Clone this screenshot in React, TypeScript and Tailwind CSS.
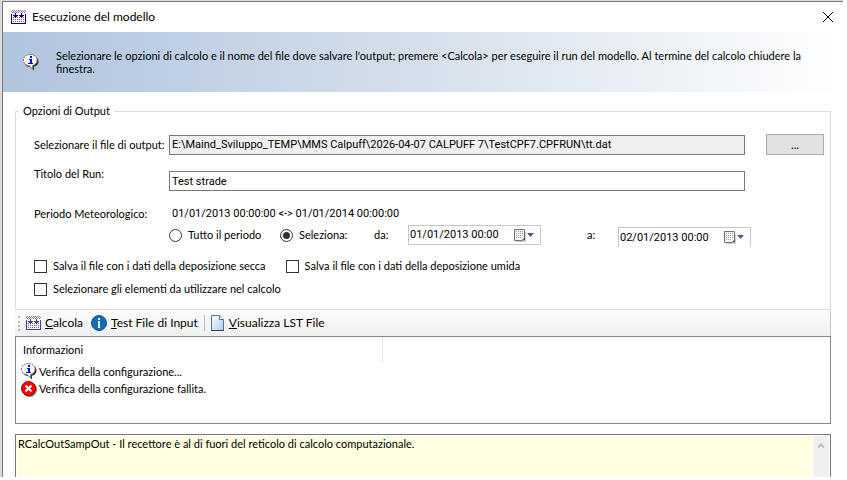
import React, { useState } from "react";

function BuildIcon({ dot, line }: { dot: string; line: string }) {
  const dots: [number, number][] = [];
  for (const y of [0, 2]) for (let x = 0; x < 7; x++) dots.push([1 + x * 2, y]);
  for (const x of [0, 2, 4, 6, 8, 10, 12, 14]) dots.push([x, 1]);
  const low: [number, number][] = [];
  for (const y of [7, 9, 11]) for (let x = 0; x < 6; x++) low.push([2 + x * 2, y]);
  return (
    <svg width="15" height="15" viewBox="0 0 15 15" shapeRendering="crispEdges" aria-hidden="true">
      {dots.map(([x, y]) => (
        <rect key={`t${x}-${y}`} x={x} y={y} width="1" height="1" fill={dot} opacity="0.7" />
      ))}
      {low.map(([x, y]) => (
        <rect key={`b${x}-${y}`} x={x} y={y} width="1" height="1" fill={dot} opacity="0.8" />
      ))}
      <path
        fill={line}
        d="M0 4h1v10H0zM14 4h1v10h-1zM0 13h15v1H0zM4 3h1v5H4zM2 5h5v1H2zM3 6h3v1H3zM10 3h1v5h-1zM8 5h5v1H8zM9 6h3v1H9z"
      />
    </svg>
  );
}

function BalloonIcon() {
  return (
    <svg width="16" height="17" viewBox="0 0 16 17" aria-hidden="true">
      <path d="M8 2c4.500 0 7.500 2 7.500 5.500S13 12.500 11 12.500L11 16.500 7 13C4 13 2 11 1.500 9z" fill="#333" />
      <path
        d="M7.500.5c4 0 6.500 2.500 6.500 5.500s-2 5-4.500 5.500V15L6 11.500C3 11.500.5 9.500.5 6S3.500.5 7.500.5z"
        fill="#fff"
        stroke="#777"
        strokeDasharray="2 1"
      />
      <path d="M7 2h2v2H7zM6 5h3v4h1v1H5V9h2V6H6z" fill="#00f" shapeRendering="crispEdges" />
    </svg>
  );
}

function ErrorIcon() {
  return (
    <svg width="16" height="16" viewBox="0 0 16 16" aria-hidden="true">
      <circle cx="8.500" cy="8.500" r="7.500" fill="#777" />
      <circle cx="7.500" cy="7.500" r="7" fill="#f00" stroke="#a00000" />
      <path d="M4.500 4.500l6 6M10.500 4.500l-6 6" stroke="#fff" strokeWidth="2" />
    </svg>
  );
}

function InfoIcon() {
  return (
    <svg width="16" height="16" viewBox="0 0 16 16" aria-hidden="true">
      <circle cx="8" cy="8" r="7.500" fill="#0f6cbd" stroke="#0b559a" />
      <path d="M7 3h2v2H7zM7 6h2v7H7z" fill="#fff" />
    </svg>
  );
}

function PageIcon() {
  return (
    <svg width="14" height="16" viewBox="0 0 14 16" aria-hidden="true">
      <defs>
        <linearGradient id="sheet" x1="0" y1="0" x2="1" y2="1">
          <stop offset="0" stopColor="#fff" />
          <stop offset="1" stopColor="#a9cdf5" />
        </linearGradient>
      </defs>
      <path d="M.5.5h8l4 4v11H.5z" fill="url(#sheet)" stroke="#5c6f8c" />
      <path d="M8.500.5v4h4" fill="#fff" stroke="#5c6f8c" />
      <path d="M0 15.500h13" stroke="#444" />
    </svg>
  );
}

function CalendarIcon() {
  return (
    <svg width="21" height="13" viewBox="0 0 21 13" aria-hidden="true">
      <path d="M2 12.500h9.500V3" fill="none" stroke="#ccc" />
      <path d="M.5.5h10v8.500l-2.500 2.500H.5z" fill="#f4f4f6" stroke="#7a6d6d" />
      <path d="M2 2.500h7M2 4.500h7M2 6.500h7M2 8.500h5" stroke="#93a0b8" strokeDasharray="1 1" />
      <path d="M11 8.500v3H8z" fill="#555" />
      <path d="M13 4h7l-3.500 4z" fill="#44598a" />
    </svg>
  );
}

function DatePicker({ id, value, clipped }: { id: string; value: string; clipped?: boolean }) {
  return (
    <div
      className={`flex h-5 w-[133px] items-center border border-[#c8c8c8] bg-white ${clipped ? "border-b-0" : ""}`}
    >
      <input
        id={id}
        defaultValue={value}
        className="w-0 flex-1 pl-px font-['Roboto','Liberation_Sans',sans-serif] outline-none"
      />
      <button type="button" aria-label="Apri calendario" className="mr-[5px]">
        <CalendarIcon />
      </button>
    </div>
  );
}

function Check({ children }: { children: React.ReactNode }) {
  return (
    <label className="flex items-center gap-1.5">
      <input type="checkbox" className="size-[13px] appearance-none border border-[#333] bg-white checked:bg-[#333]" />
      {children}
    </label>
  );
}

function Choice({
  checked,
  onChange,
  children,
}: {
  checked: boolean;
  onChange: () => void;
  children: React.ReactNode;
}) {
  return (
    <label className="flex items-center gap-1.5">
      <input
        type="radio"
        name="periodo"
        checked={checked}
        onChange={onChange}
        className="size-[13px] appearance-none rounded-full border border-[#333] bg-white bg-clip-content p-0.5 checked:bg-[#333]"
      />
      {children}
    </label>
  );
}

function ToolButton({ icon, hot, rest }: { icon: React.ReactNode; hot: string; rest: string }) {
  return (
    <button type="button" className="flex items-center gap-1">
      {icon}
      <span>
        <span className="underline">{hot}</span>
        {rest}
      </span>
    </button>
  );
}

export default function App() {
  const [whole, setWhole] = useState(false);
  return (
    <div className="bg-white pr-1 font-['Lato','Liberation_Sans',sans-serif] text-[11px] leading-[14px] text-black">
      <div className="border-l-2 border-t border-[#dcdcdc]">
        <div className="border-l border-t border-[#777]">
          <header className="flex h-[30px] items-center bg-white pl-2 pr-[9px] text-xs">
            <BuildIcon dot="#8a1a8a" line="#000080" />
            <h1 className="ml-1.5">Esecuzione del modello</h1>
            <button type="button" aria-label="Chiudi" className="ml-auto">
              <svg width="12" height="12" viewBox="0 0 12 12" aria-hidden="true">
                <path d="M1 1l10 10M11 1L1 11" stroke="#000" />
              </svg>
            </button>
          </header>

          <section className="flex h-[60px] items-center gap-[17px] bg-linear-to-r from-[#b0c4de] via-[#d6e0ec] to-white pl-5 pr-8">
            <BalloonIcon />
            <p className="flex-1 leading-[13px]">
              Selezionare le opzioni di calcolo e il nome del file dove salvare l'output; premere &lt;Calcola&gt; per
              eseguire il run del modello. Al termine del calcolo chiudere la finestra.
            </p>
          </section>

          <main className="pl-3 pr-3 pt-3">
            <fieldset className="h-[206px] border border-[#dcdcdc] pl-[18px] pr-1.5">
              <legend className="-ml-[15px] px-1">Opzioni di Output</legend>
              <div className="mt-4 grid grid-cols-[135px_1fr_58px] items-center">
                <label htmlFor="file">Selezionare il file di output:</label>
                <input
                  id="file"
                  readOnly
                  defaultValue="E:\Maind_Sviluppo_TEMP\MMS Calpuff\2026-04-07 CALPUFF 7\TestCPF7.CPFRUN\tt.dat"
                  className="mr-[21px] h-5 border border-[#7a7a7a] bg-[#f0f0f0] px-0.5 font-['Roboto','Liberation_Sans',sans-serif] outline-none"
                />
                <button type="button" className="h-[21px] border border-[#adadad] bg-[#e1e1e1]">
                  ...
                </button>
              </div>
              <div className="mt-3 grid grid-cols-[135px_1fr_58px] items-start">
                <label htmlFor="titolo">Titolo del Run:</label>
                <input
                  id="titolo"
                  defaultValue="Test strade"
                  className="mr-[21px] mt-1 h-5 border border-[#7a7a7a] bg-white px-0.5 font-['Roboto','Liberation_Sans',sans-serif] outline-none"
                />
              </div>
              <div className="mt-4 grid grid-cols-[138px_1fr] items-center">
                <span>Periodo Meteorologico:</span>
                <span className="font-['Roboto','Liberation_Sans',sans-serif]">
                  01/01/2013 00:00:00 &lt;-&gt; 01/01/2014 00:00:00
                </span>
              </div>
              <div className="mt-0.5 flex items-center pl-[135px]">
                <div className="w-[111px]">
                  <Choice checked={whole} onChange={() => setWhole(true)}>
                    Tutto il periodo
                  </Choice>
                </div>
                <div className="w-[94px]">
                  <Choice checked={!whole} onChange={() => setWhole(false)}>
                    Seleziona:
                  </Choice>
                </div>
                <label htmlFor="da" className="w-[34px]">
                  da:
                </label>
                <DatePicker id="da" value="01/01/2013 00:00" />
                <label htmlFor="a" className="ml-[46px] w-[31px]">
                  a:
                </label>
                <div className="pt-1">
                  <DatePicker id="a" value="02/01/2013 00:00" clipped />
                </div>
              </div>
              <div className="mt-3 flex gap-5">
                <Check>Salva il file con i dati della deposizione secca</Check>
                <Check>Salva il file con i dati della deposizione umida</Check>
              </div>
              <div className="mt-[9px] flex">
                <Check>Selezionare gli elementi da utilizzare nel calcolo</Check>
              </div>
            </fieldset>

            <div
              role="toolbar"
              className="flex h-[26px] items-center border-r border-[#c8c8c8] bg-linear-to-b from-[#fdfdfd] to-[#f0f0f0] pl-[3px] text-xs"
            >
              <span className="mr-1.5 h-[15px] border-l-2 border-dotted border-[#bcbcbc]" />
              <ToolButton icon={<BuildIcon dot="#55506a" line="#4a3a9a" />} hot="C" rest="alcola" />
              <span className="w-2" />
              <ToolButton icon={<InfoIcon />} hot="T" rest="est File di Input" />
              <span className="mx-1.5 h-4 border-l border-[#bdbdbd]" />
              <ToolButton icon={<PageIcon />} hot="V" rest="isualizza LST File" />
            </div>

            <section className="h-[88px] border border-[#828790] bg-white">
              <div className="flex h-[26px] w-[367px] items-center border-r border-[#e5e5e5] pl-[7px]">Informazioni</div>
              <ul className="pl-[5px]">
                <li className="flex h-[17px] items-center gap-0.5">
                  <BalloonIcon />
                  Verifica della configurazione...
                </li>
                <li className="flex h-[17px] items-center gap-0.5">
                  <ErrorIcon />
                  Verifica della configurazione fallita.
                </li>
              </ul>
            </section>

            <div className="mt-2.5 flex h-[43px] border border-b-0 border-[#7a7a7a] p-px pb-0">
              <textarea
                readOnly
                aria-label="Messaggi"
                className="flex-1 resize-none bg-[#ffffe1] px-px pt-px outline-none"
                defaultValue="RCalcOutSampOut - Il recettore è al di fuori del reticolo di calcolo computazionale."
              />
              <button
                type="button"
                aria-label="Scorri in alto"
                className="ml-px flex w-4 justify-center bg-[#f0f0f0] pt-1.5"
              >
                <svg width="8" height="7" viewBox="0 0 8 7" aria-hidden="true">
                  <path d="M1 5.500l3-3 3 3" fill="none" stroke="#bdbdbd" strokeWidth="2" />
                </svg>
              </button>
            </div>
          </main>
        </div>
      </div>
    </div>
  );
}
